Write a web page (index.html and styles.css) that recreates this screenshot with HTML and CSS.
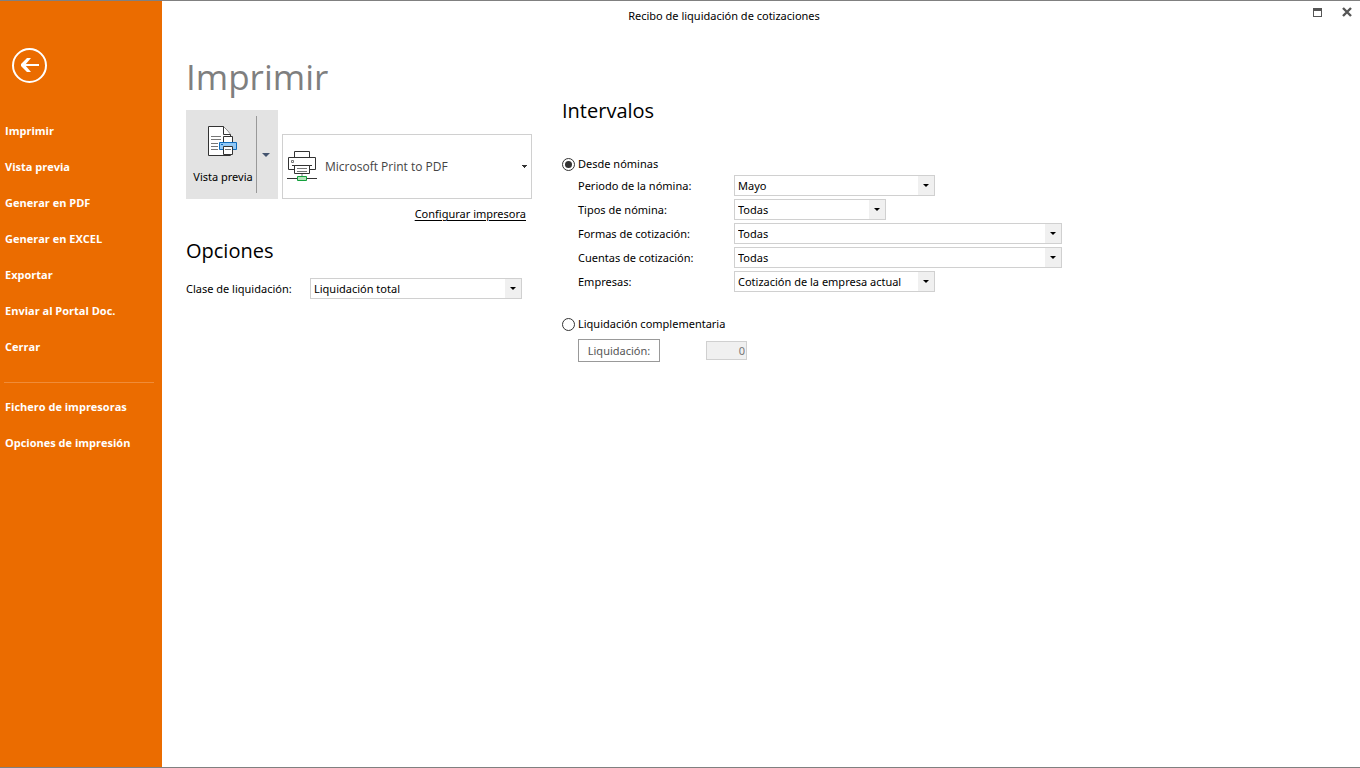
FILE: index.html
```html
<!DOCTYPE html>
<html lang="es">
<head>
<meta charset="utf-8">
<title>Recibo de liquidación de cotizaciones</title>
<link rel="stylesheet" href="styles.css">
</head>
<body>
<div class="window">
  <aside class="sidebar">
    <button class="back" type="button" aria-label="Volver">
      <svg width="35" height="35" viewBox="0 0 35 35" fill="none" stroke="#fff">
        <circle cx="17.5" cy="17.5" r="16.5" stroke-width="2"/>
        <path d="M11 17H27" stroke-width="2"/>
        <path d="M15 10h4l-6 7l6 7h-4l-6-6v-2z" fill="#fff" stroke="none"/>
      </svg>
    </button>
    <nav class="menu">
      <a href="#">Imprimir</a>
      <a href="#">Vista previa</a>
      <a href="#">Generar en PDF</a>
      <a href="#">Generar en EXCEL</a>
      <a href="#">Exportar</a>
      <a href="#">Enviar al Portal Doc.</a>
      <a href="#">Cerrar</a>
      <hr>
      <a href="#">Fichero de impresoras</a>
      <a href="#">Opciones de impresión</a>
    </nav>
  </aside>

  <div class="page">
    <header class="titlebar">
      <span class="caption">Recibo de liquidación de cotizaciones</span>
      <div class="controls">
        <button type="button" aria-label="Maximizar">
          <svg width="9" height="9" viewBox="0 0 9 9"><path d="M0 0h9v9H0zM1 3v5h7V3z" fill="#555" fill-rule="evenodd"/></svg>
        </button>
        <button type="button" aria-label="Cerrar ventana">
          <svg width="10" height="10" viewBox="0 0 10 10"><path d="M1 1l8 8M9 1l-8 8" stroke="#555" stroke-width="2.400"/></svg>
        </button>
      </div>
    </header>

    <main class="content">
      <section class="print">
        <h1>Imprimir</h1>
        <div class="output">
          <div class="split">
            <button class="preview" type="button">
              <svg width="30" height="31" viewBox="0 0 30 31" fill="#fff" stroke="#333">
                <path d="M.5.500h15l7 8v21H.5z"/>
                <path d="M15.500.500v8h7"/>
                <path d="M3 10.500h10M3 13.500h10M3 17.500h7M3 20.500h7M3 23.500h7" stroke="#777"/>
                <path d="M15.500 10.500h9v6h-9z"/>
                <path d="M11.500 16.500h17v7h-17z" fill="#91c8f6" stroke="#0f6cbd"/>
                <path d="M13 18.500h2" stroke="#0f6cbd"/>
                <path d="M15.500 20.500h9v8h-9z"/>
                <path d="M17 23.500h6" stroke="#777"/>
              </svg>
              <span>Vista previa</span>
            </button>
            <button class="more" type="button" aria-label="Más opciones de vista previa">
              <svg width="8" height="4" viewBox="0 0 8 4"><path d="M0 0h8L4 4z" fill="#44546f"/></svg>
            </button>
          </div>
          <button class="printer" type="button" aria-haspopup="listbox">
            <svg width="30" height="31" viewBox="0 0 30 31" fill="#fff" stroke="#333">
              <path d="M7.500 7V.500h15V7"/>
              <path d="M1.500 6.500h27v12h-27z"/>
              <path d="M4.500 9.500h2v2h-2z" stroke="#777"/>
              <path d="M5 14.500h20"/>
              <path d="M7.500 14.500h15v8h-15z"/>
              <path d="M10 17.500h10M10 20.500h10" stroke="#777"/>
              <path d="M15 23v3" stroke="#bbb" stroke-width="2"/>
              <path d="M0 27.500h30"/>
              <path d="M10.500 25.500h9v4h-9z" fill="#b5e3b9" stroke="#13a03c"/>
            </svg>
            <span>Microsoft Print to PDF</span>
            <svg width="5" height="3" viewBox="0 0 5 3"><path d="M0 0h5v1H4v1H3v1H2V2H1V1H0z" fill="#333"/></svg>
          </button>
        </div>
        <a class="setup" href="#">Configurar impresora</a>

        <h2>Opciones</h2>
        <div class="option">
          <label for="clase">Clase de liquidación:</label>
          <div class="combo"><select id="clase"><option>Liquidación total</option></select></div>
        </div>
      </section>

      <section class="ranges">
        <h2>Intervalos</h2>
        <label class="radio"><input type="radio" name="origen" checked>Desde nóminas</label>
        <div class="fields">
          <label for="periodo">Periodo de la nómina:</label>
          <div class="combo medium"><select id="periodo"><option>Mayo</option></select></div>
          <label for="tipos">Tipos de nómina:</label>
          <div class="combo short"><select id="tipos"><option>Todas</option></select></div>
          <label for="formas">Formas de cotización:</label>
          <div class="combo"><select id="formas"><option>Todas</option></select></div>
          <label for="cuentas">Cuentas de cotización:</label>
          <div class="combo"><select id="cuentas"><option>Todas</option></select></div>
          <label for="empresas">Empresas:</label>
          <div class="combo medium"><select id="empresas"><option>Cotización de la empresa actual</option></select></div>
        </div>
        <label class="radio"><input type="radio" name="origen">Liquidación complementaria</label>
        <div class="extra">
          <button class="pick" type="button">Liquidación:</button>
          <input class="number" type="text" value="0" aria-label="Número de liquidación" disabled>
        </div>
      </section>
    </main>
  </div>
</div>
</body>
</html>
```
FILE: styles.css
```css
* {
  box-sizing: border-box;
}

body {
  margin: 0;
  background: #fff;
  color: #000;
  font: 11px/16px "Noto Sans", "Open Sans", sans-serif;
}

button,
input,
select {
  margin: 0;
  padding: 0;
  border: 0;
  background: none;
  color: inherit;
  font: inherit;
}

svg {
  display: block;
  flex: none;
}

h1,
h2 {
  margin: 0;
  font-weight: 400;
}

h2 {
  font: 20px/28px "Open Sans", sans-serif;
}

.window {
  display: flex;
  min-height: 100vh;
  border-top: 1px solid #808080;
  border-bottom: 1px solid #808080;
}

.sidebar {
  flex: none;
  width: 162px;
  padding-top: 47px;
  background: #eb6c00;
  color: #fff;
}

.back {
  display: block;
  margin: 0 0 30px 12px;
}

.menu {
  display: flex;
  flex-direction: column;
}

.menu a {
  padding-left: 5px;
  color: inherit;
  font: 700 11px/36px "Open Sans", sans-serif;
  text-decoration: none;
}

.menu hr {
  width: 150px;
  margin: 17px 4px 6px;
  border: 0;
  border-top: 1px solid #f08c38;
}

.page {
  display: flex;
  flex: 1;
  flex-direction: column;
}

.titlebar {
  position: relative;
  padding: 7px 74px 7px 0;
  text-align: center;
}

.controls {
  display: flex;
  position: absolute;
  top: 6px;
  right: 8px;
  gap: 20px;
  align-items: center;
}

.content {
  display: flex;
  gap: 30px;
  padding: 22px 24px;
}

.print {
  flex: none;
  width: 346px;
}

h1 {
  margin-bottom: 9px;
  color: #7f7f7f;
  font: 35px/48px "Open Sans", sans-serif;
}

.output {
  display: flex;
  align-items: flex-end;
  gap: 4px;
}

.split {
  display: flex;
  flex: none;
  width: 92px;
  height: 89px;
  padding: 6px 0;
  background: #e3e3e3;
}

.preview {
  display: flex;
  flex-direction: column;
  align-items: center;
  gap: 12px;
  width: 71px;
  padding: 10px 0 0 4px;
  border-right: 1px solid #999;
  white-space: nowrap;
}

.more {
  display: flex;
  flex: 1;
  align-items: center;
  padding-left: 5px;
}

.printer {
  display: flex;
  flex: 1;
  align-items: center;
  gap: 8px;
  height: 65px;
  padding: 0 4px;
  border: 1px solid #d0d0d0;
  color: #444;
  font: 12px/16px "Open Sans", sans-serif;
  text-align: left;
}

.printer span {
  flex: 1;
}

.setup {
  display: block;
  margin: 7px 6px 15px;
  color: #000;
  text-align: right;
  text-underline-offset: 2px;
}

.option {
  display: grid;
  grid-template-columns: 124px 212px;
  align-items: center;
  margin-top: 13px;
}

.combo {
  position: relative;
}

.combo select {
  display: block;
  width: 100%;
  height: 21px;
  padding: 0 20px 0 3px;
  border: 1px solid #d0d0d0;
  border-radius: 0;
  appearance: none;
  background: linear-gradient(#f0f0f0, #f0f0f0) right / 16px 100% no-repeat;
}

.combo::after {
  position: absolute;
  top: 9px;
  right: 6px;
  border: 3px solid transparent;
  border-top-color: #000;
  border-bottom: 0;
  content: "";
  pointer-events: none;
}

.ranges {
  flex: 1;
  padding-top: 44px;
}

.radio {
  display: flex;
  align-items: center;
  gap: 3px;
}

.radio input {
  display: grid;
  place-items: center;
  width: 13px;
  height: 13px;
  border: 1px solid #333;
  border-radius: 50%;
  appearance: none;
  background: #fff;
}

.radio input:checked::before {
  width: 7px;
  height: 7px;
  border-radius: 50%;
  background: #333;
  content: "";
}

.ranges h2 {
  margin-bottom: 31px;
}

.fields {
  display: grid;
  grid-template-columns: 156px minmax(0, 328px);
  row-gap: 3px;
  align-items: center;
  margin: 3px 0 24px 16px;
}

.medium {
  width: 201px;
}

.short {
  width: 152px;
}

.extra {
  display: flex;
  align-items: center;
  gap: 46px;
  margin: 7px 0 0 16px;
}

.pick {
  width: 82px;
  height: 23px;
  border: 1px solid #999;
  color: #555;
}

.number {
  width: 41px;
  height: 19px;
  padding-right: 1px;
  border: 1px solid #d0d0d0;
  background: #f0f0f0;
  color: #777;
  text-align: right;
}
```
